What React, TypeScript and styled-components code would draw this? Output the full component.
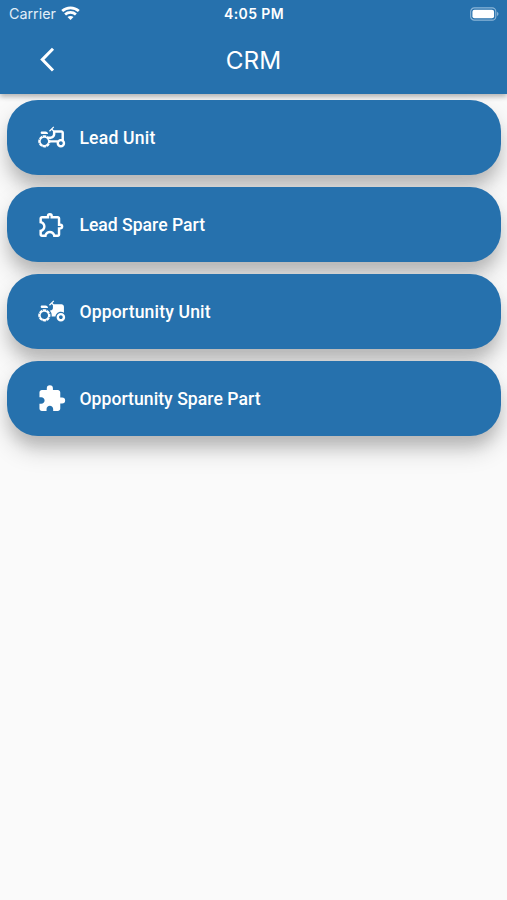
import React from 'react';
import styled, { createGlobalStyle } from 'styled-components';
import { MdAgriculture, MdExtension, MdOutlineAgriculture, MdOutlineExtension } from 'react-icons/md';

const BLUE = '#2671ad';

const GlobalStyle = createGlobalStyle`
  * { box-sizing: border-box; }
  body { margin: 0; background: #fafafa; }
`;

const Screen = styled.div`
  min-height: 900px;
  overflow: hidden;
  background: #fafafa;
  color: #fff;
  font-family: Roboto, sans-serif;
`;

const Header = styled.header`
  position: relative;
  height: 94px;
  background: ${BLUE};
  box-shadow: 0 3px 5px rgba(0, 0, 0, 0.22), 0 1px 6px rgba(0, 0, 0, 0.1);
`;

const StatusBar = styled.div`
  display: grid;
  grid-template-columns: 1fr auto 1fr;
  align-items: center;
  height: 26px;
  padding: 1px 8px 0 9px;
  font-family: Inter, sans-serif;
  line-height: 18px;
`;

const Carrier = styled.div`
  display: flex;
  align-items: center;
  gap: 5.5px;
  font-size: 14.3px;
  color: #e2eef8;
`;

const Clock = styled.div`
  font-size: 14px;
  font-weight: 600;
  letter-spacing: 0.4px;
`;

const Battery = styled.svg`
  justify-self: end;
  display: block;
`;

const NavBar = styled.nav`
  display: grid;
  grid-template-columns: 1fr auto 1fr;
  align-items: center;
  height: 68px;
  padding-left: 38px;
`;

const BackButton = styled.button`
  display: flex;
  width: 18px;
  padding: 0;
  border: 0;
  background: none;
  color: #fff;
`;

const Title = styled.h1`
  margin: 0 38px 0 0;
  font-family: Inter, sans-serif;
  font-size: 24.3px;
  font-weight: 400;
  line-height: 30px;
`;

const Menu = styled.main`
  position: relative;
  display: flex;
  flex-direction: column;
  gap: 12.2px;
  padding: 6px 6.5px 0 7px;
`;

const MenuButton = styled.button`
  display: flex;
  align-items: center;
  gap: 12.6px;
  height: 74.9px;
  padding: 1px 0 0 30.4px;
  border: 0;
  border-radius: 31px;
  background: ${BLUE};
  color: #fff;
  font-family: inherit;
  text-align: left;
  box-shadow: 0 14px 24px rgba(0, 0, 0, 0.18), 0 12px 14px -2px rgba(0, 0, 0, 0.12);

  svg { flex: none; }
`;

const Label = styled.span<{ $spacing: number }>`
  font-size: 17.6px;
  font-weight: 500;
  line-height: 24px;
  letter-spacing: ${({ $spacing }) => $spacing}px;
`;

const items = [
  { label: 'Lead Unit', Icon: MdOutlineAgriculture, spacing: 0.2 },
  { label: 'Lead Spare Part', Icon: MdOutlineExtension, spacing: 0 },
  { label: 'Opportunity Unit', Icon: MdAgriculture, spacing: 0.15 },
  { label: 'Opportunity Spare Part', Icon: MdExtension, spacing: 0.04 },
];

export default function App() {
  return (
    <Screen>
      <GlobalStyle />
      <Header>
        <StatusBar>
          <Carrier>
            Carrier
            <svg width="19" height="15" viewBox="0 0 19 15" fill="none" stroke="#fff" strokeWidth="2.7">
              <path d="M1.2 5.1C5.8 .7 13.2 .7 17.8 5.1" />
              <path d="M4.1 8.4C7.1 5.6 11.9 5.6 14.9 8.4" />
              <path d="M9.5 14 6.5 11C8.2 9.5 10.8 9.5 12.5 11Z" fill="#fff" stroke="none" />
            </svg>
          </Carrier>
          <Clock>4:05 PM</Clock>
          <Battery width="29" height="14" viewBox="0 0 30 14">
            <rect x="0.7" y="0.7" width="26" height="12.6" rx="3.8" fill="none" stroke="#8bb5d7" strokeWidth="1.2" />
            <rect x="2.5" y="2.5" width="22.4" height="9" rx="2.2" fill="#fff" />
            <path d="M28 4.8q3 2.2 0 4.4z" fill="#8bb5d7" />
          </Battery>
        </StatusBar>
        <NavBar>
          <BackButton aria-label="Back">
            <svg width="18" height="26" viewBox="0 0 18 26" fill="none" stroke="#fff" strokeWidth="3">
              <path d="M15 1.7 4.3 12.6 15 23.5" />
            </svg>
          </BackButton>
          <Title>CRM</Title>
        </NavBar>
      </Header>
      <Menu>
        {items.map(({ label, Icon, spacing }) => (
          <MenuButton key={label}>
            <Icon size={29.4} />
            <Label $spacing={spacing}>{label}</Label>
          </MenuButton>
        ))}
      </Menu>
    </Screen>
  );
}
